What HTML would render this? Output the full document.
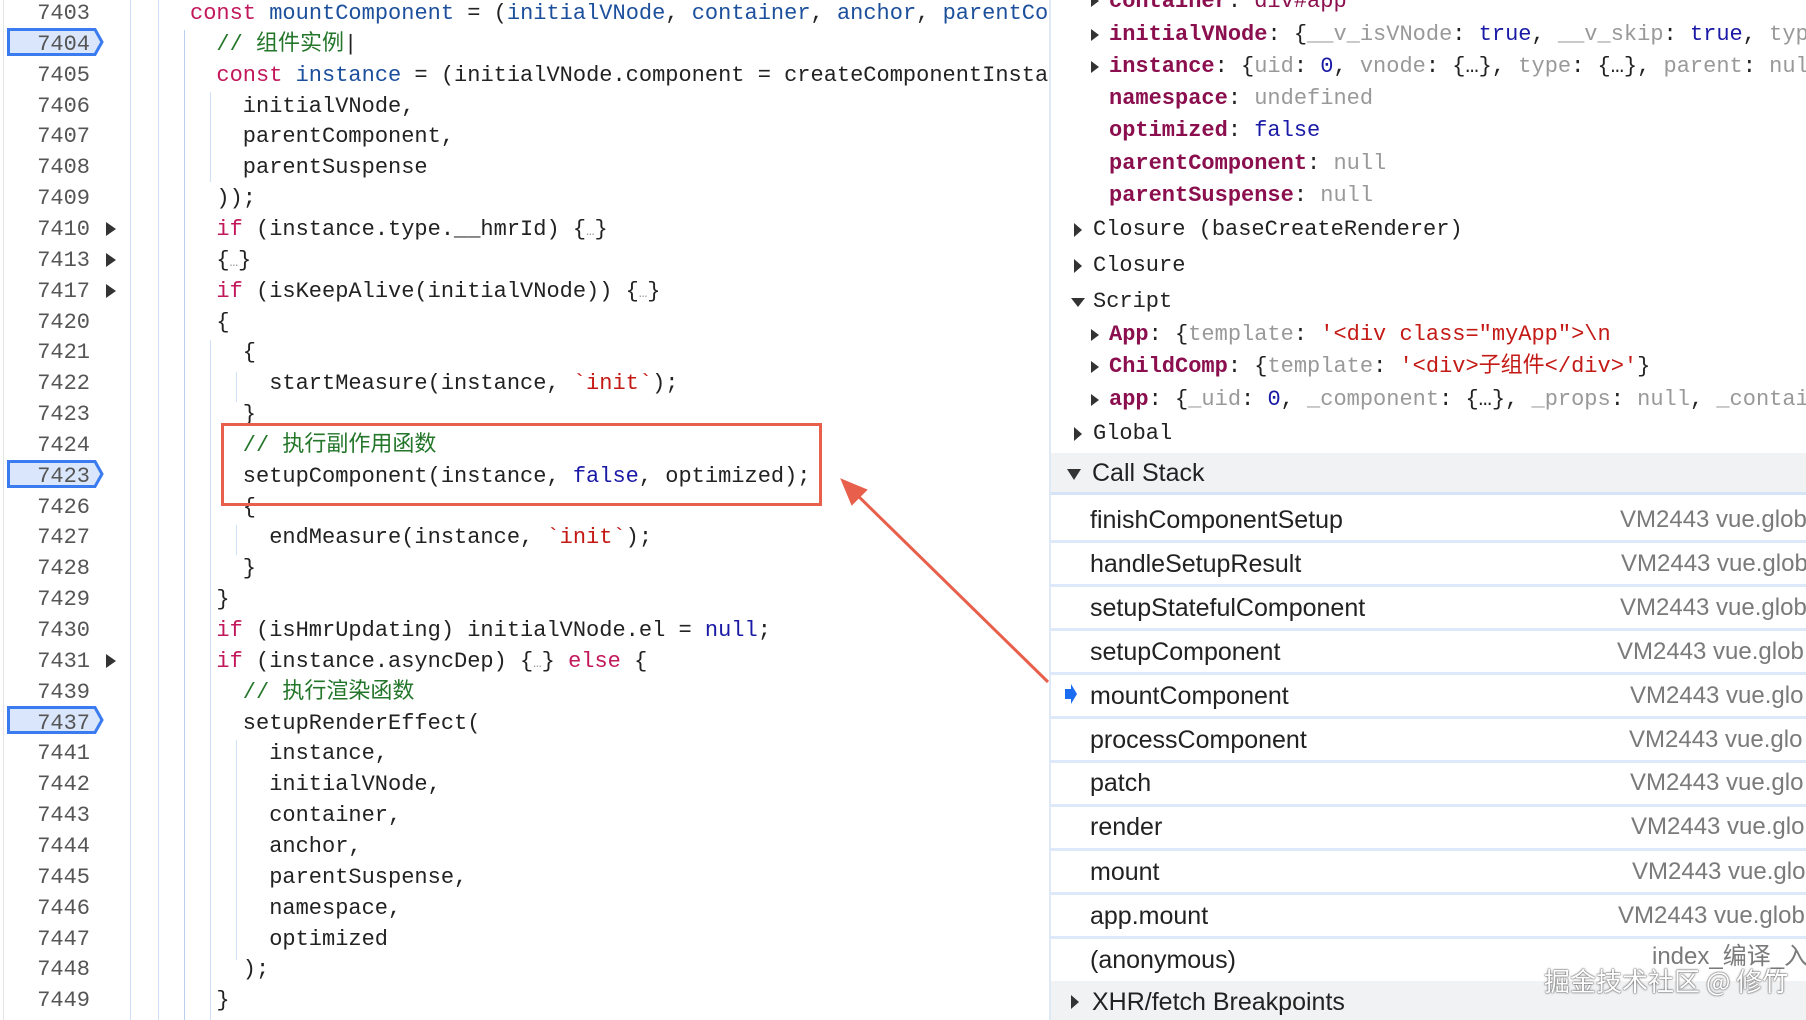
<!DOCTYPE html>
<html><head><meta charset="utf-8"><style>
*{margin:0;padding:0;box-sizing:border-box}
html,body{width:1806px;height:1020px;overflow:hidden;background:#fff}
#wrap{position:relative;width:1806px;height:1020px;overflow:hidden;font-family:"Liberation Mono","Noto Sans CJK SC",monospace;font-size:22px;color:#222}
.ln{position:absolute;left:0;width:90px;text-align:right;color:#555;height:31px;line-height:31px}
.cl{position:absolute;white-space:pre;height:31px;line-height:31px}
.k{color:#c2185b}.v{color:#1c4f9c}.c{color:#23762a}.s{color:#c41a16}.b{color:#1a1aa6}.g{color:#999}
.tri{position:absolute;width:0;height:0;border-top:7px solid transparent;border-bottom:7px solid transparent;border-left:10px solid #333}
.trd{position:absolute;width:0;height:0;border-left:7px solid transparent;border-right:7px solid transparent;border-top:10px solid #333}
.bp{position:absolute;left:7px;width:97px;height:28px}
.vl{position:absolute;width:1px;background:#cfe0f7}
.r{position:absolute;white-space:pre;height:30px;line-height:30px}
.kk{color:#8b0f4e;font-weight:bold}
.cs{position:absolute;left:1090px;font-family:"Liberation Sans","Noto Sans CJK SC",sans-serif;font-size:25px;color:#222;height:30px;line-height:30px;white-space:pre}
.cr{position:absolute;font-family:"Liberation Sans",sans-serif;font-size:24px;color:#7a7a7a;height:30px;line-height:30px;white-space:pre}
.sep{position:absolute;left:1050px;right:0;height:3px;background:#dde8f8}
</style></head><body><div id="wrap">
<div class="vl" style="left:3px;top:0;height:1020px;background:#e4e4e4"></div>
<div class="vl" style="left:130px;top:0;height:1020px"></div>
<div class="vl" style="left:158px;top:0;height:1020px"></div>
<div class="vl" style="left:184px;top:30px;height:990px;background:#b9d0f0"></div>
<div class="vl" style="left:210px;top:92px;height:90px"></div>
<div class="vl" style="left:210px;top:340px;height:680px"></div>
<div class="vl" style="left:236px;top:372px;height:30px"></div>
<div class="vl" style="left:236px;top:525px;height:30px"></div>
<div class="vl" style="left:236px;top:740px;height:220px"></div>
<svg class="bp" style="top:28px" viewBox="0 0 97 28"><path d="M1.5 1.5H88L95 14L88 26.5H1.5Z" fill="#d9e6fb" stroke="#3a7bf0" stroke-width="3"/></svg>
<svg class="bp" style="top:460px" viewBox="0 0 97 28"><path d="M1.5 1.5H88L95 14L88 26.5H1.5Z" fill="#d9e6fb" stroke="#3a7bf0" stroke-width="3"/></svg>
<svg class="bp" style="top:706px" viewBox="0 0 97 28"><path d="M1.5 1.5H88L95 14L88 26.5H1.5Z" fill="#d9e6fb" stroke="#3a7bf0" stroke-width="3"/></svg>
<div id="code"></div>
<script>
var L=[
["7403",0,'<span class="k">const</span> <span class="v">mountComponent</span> = (<span class="v">initialVNode</span>, <span class="v">container</span>, <span class="v">anchor</span>, <span class="v">parentComponent</span>'],
["7404",2,'<span class="c">// 组件实例</span>|'],
["7405",2,'<span class="k">const</span> <span class="v">instance</span> = (initialVNode.component = createComponentInstance('],
["7406",4,'initialVNode,'],
["7407",4,'parentComponent,'],
["7408",4,'parentSuspense'],
["7409",2,'));'],
["7410",2,'<span class="k">if</span> (instance.type.__hmrId) {<span class="g" style="font-size:14px">…</span>}',1],
["7413",2,'{<span class="g" style="font-size:14px">…</span>}',1],
["7417",2,'<span class="k">if</span> (isKeepAlive(initialVNode)) {<span class="g" style="font-size:14px">…</span>}',1],
["7420",2,'{'],
["7421",4,'{'],
["7422",6,'startMeasure(instance, <span class="s">`init`</span>);'],
["7423",4,'}'],
["7424",4,'<span class="c">// 执行副作用函数</span>'],
["7423",4,'setupComponent(instance, <span class="b">false</span>, optimized);'],
["7426",4,'{'],
["7427",6,'endMeasure(instance, <span class="s">`init`</span>);'],
["7428",4,'}'],
["7429",2,'}'],
["7430",2,'<span class="k">if</span> (isHmrUpdating) initialVNode.el = <span class="b">null</span>;'],
["7431",2,'<span class="k">if</span> (instance.asyncDep) {<span class="g" style="font-size:14px">…</span>} <span class="k">else</span> {',1],
["7439",4,'<span class="c">// 执行渲染函数</span>'],
["7437",4,'setupRenderEffect('],
["7441",6,'instance,'],["7442",6,'initialVNode,'],["7443",6,'container,'],["7444",6,'anchor,'],["7445",6,'parentSuspense,'],["7446",6,'namespace,'],["7447",6,'optimized'],
["7448",4,');'],["7449",2,'}'],["",2,'{']
];
var h='';
L.forEach(function(l,i){var t=-2+i*30.85;
h+='<div class="ln" style="top:'+t+'px">'+l[0]+'</div>';
if(l[3])h+='<div class="tri" style="left:106px;top:'+(t+8)+'px"></div>';
h+='<div class="cl" style="top:'+t+'px;left:'+(190+l[1]*13.2)+'px;max-width:'+(860-l[1]*13.2)+'px;overflow:hidden">'+l[2]+'</div>';});
document.getElementById('code').innerHTML=h;
</script>
<div style="position:absolute;left:221px;top:423px;width:601px;height:83px;border:3px solid #e8604c"></div>
<svg style="position:absolute;left:0;top:0" width="1806" height="1020"><line x1="1048" y1="682" x2="852" y2="490" stroke="#e8604c" stroke-width="3"/><path d="M842 480L866 490L852 504Z" fill="#e8604c" stroke="#e8604c" stroke-width="2"/></svg>
<div style="position:absolute;left:1049px;top:0;width:2px;height:1020px;background:#dfe8f5"></div>
<div style="position:absolute;left:1051px;right:0;top:0;height:1020px;background:#fff"></div>
<div class="tri" style="left:1091px;top:-5px;border-top-width:6px;border-bottom-width:6px;border-left-width:8px"></div><div class="r" style="left:1109px;top:-13px"><span class="kk">container</span>: <span style="color:#8b0f4e">div#app</span></div>
<div class="tri" style="left:1091px;top:29px;border-top-width:6px;border-bottom-width:6px;border-left-width:8px"></div><div class="r" style="left:1109px;top:20px"><span class="kk">initialVNode</span>: {<span class="g">__v_isVNode</span>: <span class="b">true</span>, <span class="g">__v_skip</span>: <span class="b">true</span>, <span class="g">type</span></div>
<div class="tri" style="left:1091px;top:61px;border-top-width:6px;border-bottom-width:6px;border-left-width:8px"></div><div class="r" style="left:1109px;top:52px"><span class="kk">instance</span>: {<span class="g">uid</span>: <span class="b">0</span>, <span class="g">vnode</span>: {…}, <span class="g">type</span>: {…}, <span class="g">parent</span>: <span class="g">null</span></div>
<div class="r" style="left:1109px;top:84px"><span class="kk">namespace</span>: <span class="g">undefined</span></div>
<div class="r" style="left:1109px;top:116px"><span class="kk">optimized</span>: <span class="b">false</span></div>
<div class="r" style="left:1109px;top:149px"><span class="kk">parentComponent</span>: <span class="g">null</span></div>
<div class="r" style="left:1109px;top:181px"><span class="kk">parentSuspense</span>: <span class="g">null</span></div>
<div class="tri" style="left:1074px;top:223px;border-top-width:7px;border-bottom-width:7px;border-left-width:8px"></div><div class="r" style="left:1093px;top:215px">Closure (baseCreateRenderer)</div>
<div class="tri" style="left:1074px;top:259px;border-top-width:7px;border-bottom-width:7px;border-left-width:8px"></div><div class="r" style="left:1093px;top:251px">Closure</div>
<div class="trd" style="left:1071px;top:298px;border-top-width:9px"></div><div class="r" style="left:1093px;top:287px">Script</div>
<div class="tri" style="left:1091px;top:329px;border-top-width:6px;border-bottom-width:6px;border-left-width:8px"></div><div class="r" style="left:1109px;top:320px"><span class="kk">App</span>: {<span class="g">template</span>: <span class="s">'&lt;div class="myApp"&gt;\n</span></div>
<div class="tri" style="left:1091px;top:361px;border-top-width:6px;border-bottom-width:6px;border-left-width:8px"></div><div class="r" style="left:1109px;top:352px"><span class="kk">ChildComp</span>: {<span class="g">template</span>: <span class="s">'&lt;div&gt;子组件&lt;/div&gt;'</span>}</div>
<div class="tri" style="left:1091px;top:394px;border-top-width:6px;border-bottom-width:6px;border-left-width:8px"></div><div class="r" style="left:1109px;top:385px"><span class="kk">app</span>: {<span class="g">_uid</span>: <span class="b">0</span>, <span class="g">_component</span>: {…}, <span class="g">_props</span>: <span class="g">null</span>, <span class="g">_contai</span></div>
<div class="tri" style="left:1074px;top:427px;border-top-width:7px;border-bottom-width:7px;border-left-width:8px"></div><div class="r" style="left:1093px;top:419px">Global</div>
<div style="position:absolute;left:1051px;right:0;top:453px;height:42px;background:#f1f2f4;border-bottom:3px solid #d6e4f8"></div>
<div class="trd" style="left:1067px;top:469px;border-top-width:11px"></div><div class="cs" style="left:1092px;top:458px">Call Stack</div>
<div class="cs" style="top:505px">finishComponentSetup</div><div class="cr" style="left:1620px;top:505px">VM2443 vue.glob</div>
<div class="sep" style="top:540px"></div>
<div class="cs" style="top:549px">handleSetupResult</div><div class="cr" style="left:1621px;top:549px">VM2443 vue.glob</div>
<div class="sep" style="top:584px"></div>
<div class="cs" style="top:593px">setupStatefulComponent</div><div class="cr" style="left:1620px;top:593px">VM2443 vue.glob</div>
<div class="sep" style="top:628px"></div>
<div class="cs" style="top:637px">setupComponent</div><div class="cr" style="left:1617px;top:637px">VM2443 vue.glob</div>
<div class="sep" style="top:672px"></div>
<svg style="position:absolute;left:1064px;top:684px" width="14" height="20"><path d="M1 5H7V0L13 10L7 20V15H1Z" fill="#1a6cf0"/></svg>
<div class="cs" style="top:681px">mountComponent</div><div class="cr" style="left:1630px;top:681px">VM2443 vue.glo</div>
<div class="sep" style="top:716px"></div>
<div class="cs" style="top:725px">processComponent</div><div class="cr" style="left:1629px;top:725px">VM2443 vue.glo</div>
<div class="sep" style="top:760px"></div>
<div class="cs" style="top:768px">patch</div><div class="cr" style="left:1630px;top:768px">VM2443 vue.glo</div>
<div class="sep" style="top:804px"></div>
<div class="cs" style="top:812px">render</div><div class="cr" style="left:1631px;top:812px">VM2443 vue.glo</div>
<div class="sep" style="top:848px"></div>
<div class="cs" style="top:857px">mount</div><div class="cr" style="left:1632px;top:857px">VM2443 vue.glo</div>
<div class="sep" style="top:892px"></div>
<div class="cs" style="top:901px">app.mount</div><div class="cr" style="left:1618px;top:901px">VM2443 vue.glob</div>
<div class="sep" style="top:936px"></div>
<div class="cs" style="top:945px">(anonymous)</div><div class="cr" style="left:1652px;top:942px;font-family:'Liberation Sans','Noto Sans CJK SC',sans-serif">index_编译_入</div>
<div style="position:absolute;left:1051px;right:0;top:981px;height:39px;background:#f1f2f4"></div>
<div class="tri" style="left:1071px;top:995px;border-left-width:8px"></div><div class="cs" style="left:1092px;top:987px">XHR/fetch Breakpoints</div>
<div style="position:absolute;left:1544px;top:962px;font-family:'Noto Sans CJK SC',sans-serif;font-size:26px;color:#fff;text-shadow:0 0 2px #555,0 0 1px #333;white-space:nowrap">掘金技术社区 @ 修竹</div>
</div></body></html>
